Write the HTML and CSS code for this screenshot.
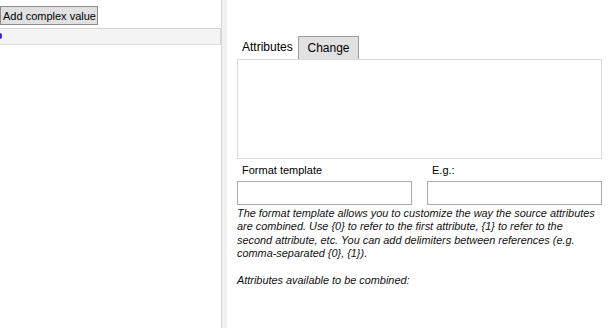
FILE: index.html
```html
<!DOCTYPE html>
<html lang="en">
<head>
    <meta charset="UTF-8">
    <title>Complex value</title>
    <link rel="stylesheet" href="styles.css">
</head>
<body>
    <div class="window">
        <div class="leftPane">
            <button class="addBtn">Add complex value</button>
            <div class="listHeader"><span class="mark"></span></div>
        </div>
        <div class="splitter"></div>
        <div class="rightPane">
            <div class="tabs">
                <div class="tab active">Attributes</div>
                <div class="tab">Change</div>
            </div>
            <div class="tabPage"></div>
            <div class="fields">
                <div class="field">
                    <label class="fieldLabel">Format template</label>
                    <input class="textBox" type="text">
                </div>
                <div class="field">
                    <label class="fieldLabel">E.g.:</label>
                    <input class="textBox" type="text">
                </div>
            </div>
            <p class="hint">The format template allows you to customize the way the source attributes<br>are combined. Use {0} to refer to the first attribute, {1} to refer to the<br>second attribute, etc. You can add delimiters between references (e.g.<br>comma-separated {0}, {1}).</p>
            <p class="hint available">Attributes available to be combined:</p>
        </div>
    </div>
</body>
</html>
```
FILE: styles.css
```css
body {
    margin: 0;
    background: #fff;
    font-family: "Liberation Sans", Arial, sans-serif;
    font-size: 11px;
    color: #000;
}
.window {
    display: flex;
    width: 614px;
    height: 328px;
    overflow: hidden;
}
.leftPane {
    flex-shrink: 0;
    width: 221px;
    border-right: 1px solid #d6d6d6;
    padding-top: 6px;
    overflow: hidden;
}
.addBtn {
    display: block;
    height: 19px;
    margin: 0;
    padding: 0 1px 0 2px;
    background: #e1e1e1;
    border: 1px solid #8c8c8c;
    font-family: "Liberation Sans", Arial, sans-serif;
    font-size: 11px;
    color: #000;
}
.listHeader {
    margin-top: 3px;
    height: 15px;
    background: #f4f4f4;
    border-top: 1px solid #d4d4d4;
    border-bottom: 1px solid #e0e0e0;
    border-right: 1px solid #d4d4d4;
    overflow: hidden;
}
.mark {
    display: block;
    width: 2px;
    height: 6px;
    margin-top: 4px;
    background: #3b2fd0;
    border-radius: 0 2px 2px 0;
}
.splitter {
    flex-shrink: 0;
    width: 5px;
    background: #f0f0f0;
}
.rightPane {
    flex: 1;
    min-width: 0;
    padding: 36px 12px 0 10px;
}
.tabs {
    display: flex;
    height: 23px;
}
.tab {
    padding: 0 5px;
    line-height: 23px;
    font-size: 12px;
}
.tab.active {
    width: 51px;
}
.tab:not(.active) {
    width: 49px;
    text-align: center;
    background: #e1e1e1;
    border: 1px solid #9c9c9c;
    border-bottom: none;
    line-height: 22px;
}
.tabPage {
    height: 98px;
    border: 1px solid #dadada;
}
.fields {
    display: flex;
    gap: 15px;
    margin-top: 4px;
}
.field {
    display: flex;
    flex-direction: column;
}
.fieldLabel {
    height: 18px;
    line-height: 14px;
    padding-left: 5px;
}
.textBox {
    box-sizing: border-box;
    width: 175px;
    height: 24px;
    margin: 0;
    border: 1px solid #acacac;
    background: #fff;
}
.hint {
    margin: 2px 0 0;
    white-space: nowrap;
    font-style: italic;
    font-size: 10.9px;
    line-height: 13.4px;
    color: #111;
}
.hint.available {
    margin-top: 13px;
}
```
